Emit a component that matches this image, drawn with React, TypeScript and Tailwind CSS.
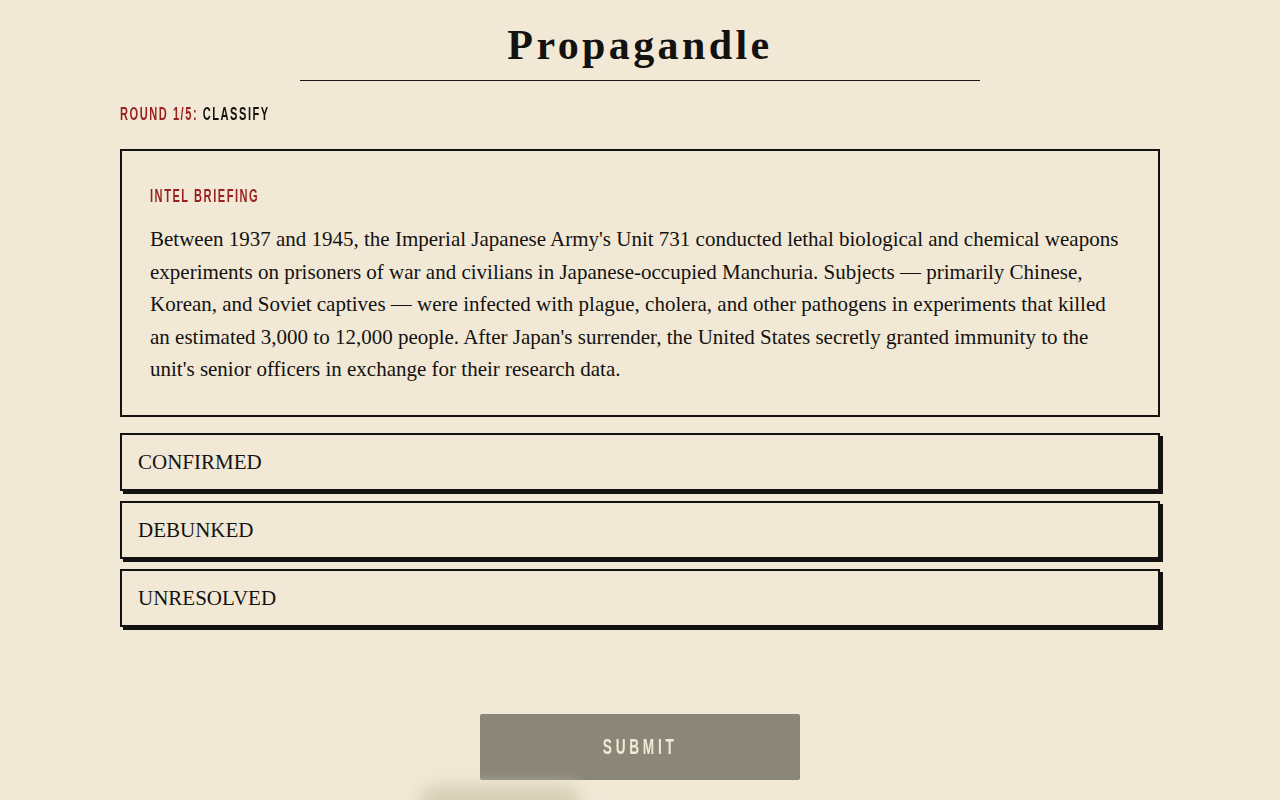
const label = { fontFamily: '"Liberation Sans", Arial, sans-serif' };
const serif = { fontFamily: '"Liberation Serif", "Times New Roman", serif' };

const choices = ['CONFIRMED', 'DEBUNKED', 'UNRESOLVED'];

export default function App() {
  return (
    <div className="min-h-[800px] w-full overflow-hidden bg-[#f1e9d6] text-[#141210]" style={serif}>
      <div className="mx-auto w-[1040px]">
        <header className="flex flex-col items-center pt-[20px]">
          <h1 className="text-[42px] font-bold leading-[50px] tracking-[3.4px]">Propagandle</h1>
          <div className="mt-[10px] h-px w-[680px] bg-[#1a1714]" />
        </header>

        {/* condensed labels: narrowed Liberation Sans */}
        <div className="mt-[23px] h-[20px] leading-[20px]">
          <span
            className="inline-block origin-left scale-x-[0.615] whitespace-nowrap text-[18px] font-bold uppercase tracking-[2.5px]"
            style={label}
          >
            <span className="text-[#9a1f1f]">Round 1/5:</span> <span>Classify</span>
          </span>
        </div>

        <section className="mt-[25px] border-2 border-[#141210] px-[28px] pt-[35px] pb-[29px]">
          <div className="h-[20px] leading-[20px]">
            <span
              className="inline-block origin-left scale-x-[0.615] whitespace-nowrap text-[18px] font-bold uppercase tracking-[2.5px] text-[#9a1f1f]"
              style={label}
            >
              Intel Briefing
            </span>
          </div>
          <p className="mt-[17px] text-[21px] leading-[32.5px]">
            Between 1937 and 1945, the Imperial Japanese Army's Unit 731 conducted lethal biological and chemical weapons
            experiments on prisoners of war and civilians in Japanese-occupied Manchuria. Subjects — primarily Chinese,
            Korean, and Soviet captives — were infected with plague, cholera, and other pathogens in experiments that killed
            an estimated 3,000 to 12,000 people. After Japan's surrender, the United States secretly granted immunity to the
            unit's senior officers in exchange for their research data.
          </p>
        </section>

        <div className="mt-[16px] flex flex-col gap-[10px]">
          {choices.map((c) => (
            <button
              key={c}
              className="flex h-[58px] w-full items-center border-2 border-[#141210] bg-[#f1e9d6] px-[16px] pt-[3px] text-left text-[21px] shadow-[3px_3px_0_#141210]"
              style={serif}
            >
              {c}
            </button>
          ))}
        </div>

        <div className="relative mt-[87px] flex justify-center">
          <button className="flex h-[66px] w-[320px] items-center justify-center rounded-[2px] bg-[#8b8778]">
            <span
              className="inline-block scale-x-[0.62] whitespace-nowrap text-[22px] font-bold uppercase tracking-[6px] text-[#f1e9d6]"
              style={label}
            >
              Submit
            </span>
          </button>
          <div className="pointer-events-none absolute left-[300px] top-[72px] h-[30px] w-[160px] rounded-full bg-[#d6cdb4] blur-[8px]" />
        </div>
      </div>
    </div>
  );
}
